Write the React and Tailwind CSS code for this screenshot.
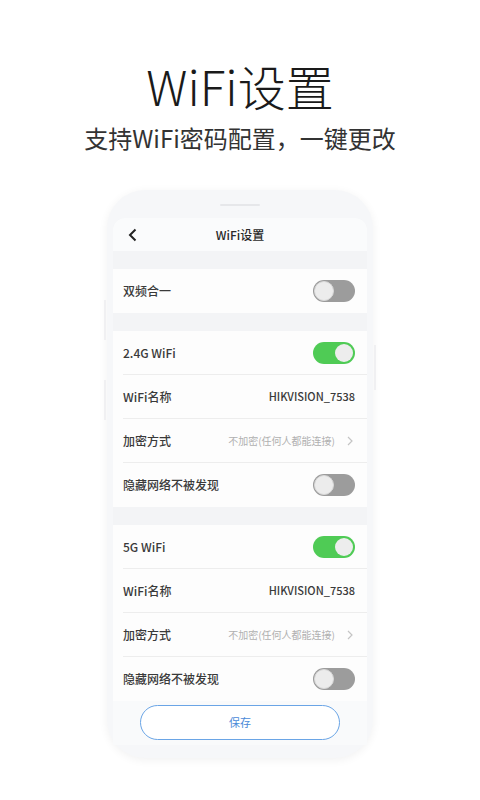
import React from "react";

const font = { fontFamily: '"Noto Sans CJK SC", "Noto Sans", sans-serif' };

function Toggle({ on }) {
  return on ? (
    <div className="w-[42px] h-[22px] rounded-full bg-[#4fcb55] flex items-center justify-end pr-[2px]">
      <div className="w-[18px] h-[18px] rounded-full bg-[#ededed]" />
    </div>
  ) : (
    <div className="w-[42px] h-[22px] rounded-full bg-[#9c9c9c] flex items-center pl-[1px]">
      <div className="w-[20px] h-[20px] rounded-full bg-[#ececec] border border-[#d8d8d8]" />
    </div>
  );
}

function Row({ label, children, divider = true }) {
  return (
    <div className="h-[44px] pl-[10px] bg-[#fdfdfd]">
      <div className={"h-full flex items-center justify-between pr-[12px] " + (divider ? "border-b border-[#ededed]" : "")}>
        <span className="text-[12px] text-[#3a3a3a] font-medium">{label}</span>
        {children}
      </div>
    </div>
  );
}

function Enc() {
  return (
    <div className="flex items-center gap-[12px] pr-[2px]">
      <span className="text-[10px] text-[#b0b0b0]">不加密(任何人都能连接)</span>
      <svg width="6" height="10" viewBox="0 0 6 10"><path d="M1 1l4 4-4 4" fill="none" stroke="#c4c4c4" strokeWidth="1.2" /></svg>
    </div>
  );
}

function Group({ name }) {
  return (
    <div>
      <Row label={name}><Toggle on /></Row>
      <Row label="WiFi名称"><span className="text-[11px] text-[#3a3a3a] font-medium">HIKVISION_7538</span></Row>
      <Row label="加密方式"><Enc /></Row>
      <Row label="隐藏网络不被发现" divider={false}><Toggle /></Row>
    </div>
  );
}

export default function App() {
  return (
    <div className="w-[480px] h-[800px] bg-white flex flex-col items-center overflow-hidden" style={font}>
      <div className="mt-[56px] text-[48px] leading-[58px] text-[#1a1a1a] font-light">WiFi设置</div>
      <div className="mt-[9px] text-[24px] leading-[30px] text-[#333]">支持WiFi密码配置，一键更改</div>
      <div className="relative mt-[37px] w-[266px] h-[568px] rounded-[38px] bg-[#f6f7f9] shadow-[0_2px_10px_rgba(0,0,0,0.06)] flex flex-col items-center">
        <div className="absolute left-[-3px] top-[110px] w-[2px] h-[40px] bg-[#f0f0f2]" />
        <div className="absolute left-[-3px] top-[190px] w-[2px] h-[40px] bg-[#f0f0f2]" />
        <div className="absolute right-[-3px] top-[155px] w-[2px] h-[45px] bg-[#f0f0f2]" />
        <div className="mt-[14px] w-[40px] h-[2px] rounded bg-[#e6e7ea]" />
        <div className="mt-[12px] w-[254px] flex-1 mb-[13px] bg-[#f3f4f6] rounded-t-[12px] flex flex-col overflow-hidden">
          <div className="h-[33px] shrink-0 bg-[#fafbfc] flex items-center relative">
            <svg className="absolute left-[15px]" width="9" height="14" viewBox="0 0 9 14"><path d="M7.5 1.5L2 7l5.5 5.5" fill="none" stroke="#222" strokeWidth="2" /></svg>
            <div className="w-full text-center text-[12px] text-[#2a2a2a] font-medium">WiFi设置</div>
          </div>
          <div className="h-[18px] shrink-0" />
          <Row label="双频合一" divider={false}><Toggle /></Row>
          <div className="h-[18px] shrink-0" />
          <Group name="2.4G WiFi" />
          <div className="h-[18px] shrink-0" />
          <Group name="5G WiFi" />
          <div className="flex-1 bg-[#f9fafb] flex items-start justify-center pt-[4px]">
            <div className="w-[200px] h-[35px] rounded-full border-[1.5px] border-[#6aa5e6] flex items-center justify-center text-[11px] text-[#4a8ad8] bg-white">保存</div>
          </div>
        </div>
      </div>
    </div>
  );
}
